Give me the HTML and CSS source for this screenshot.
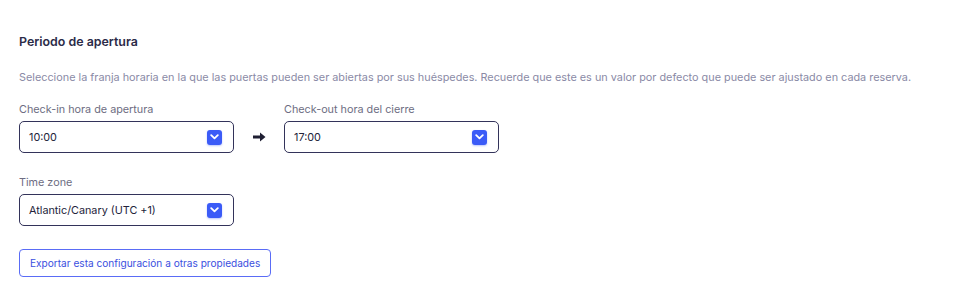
FILE: index.html
```html
<!DOCTYPE html>
<html lang="es">
<head>
    <meta charset="UTF-8">
    <title>Periodo de apertura</title>
    <link rel="stylesheet" href="styles.css">
</head>
<body>
    <section class="opening">
        <h2 class="opening-title">Periodo de apertura</h2>
        <p class="opening-desc">Seleccione la franja horaria en la que las puertas pueden ser abiertas por sus huéspedes. Recuerde que este es un valor por defecto que puede ser ajustado en cada reserva.</p>

        <div class="time-row">
            <div class="field">
                <label class="field-label">Check-in hora de apertura</label>
                <div class="select">
                    <span>10:00</span>
                    <span class="chevron">
                        <svg width="9" height="6" viewBox="0 0 9 6"><path d="M1.2 1.2 L4.5 4.4 L7.8 1.2" fill="none" stroke="#fff" stroke-width="1.8" stroke-linecap="round" stroke-linejoin="round"/></svg>
                    </span>
                </div>
            </div>

            <div class="arrow">
                <svg width="13" height="10" viewBox="0 0 13 10"><path d="M0 3.6 H7 V0.5 L12.5 5 L7 9.5 V6.4 H0 Z" fill="#1f1f33"/></svg>
            </div>

            <div class="field">
                <label class="field-label">Check-out hora del cierre</label>
                <div class="select">
                    <span>17:00</span>
                    <span class="chevron">
                        <svg width="9" height="6" viewBox="0 0 9 6"><path d="M1.2 1.2 L4.5 4.4 L7.8 1.2" fill="none" stroke="#fff" stroke-width="1.8" stroke-linecap="round" stroke-linejoin="round"/></svg>
                    </span>
                </div>
            </div>
        </div>

        <div class="field tz-field">
            <label class="field-label">Time zone</label>
            <div class="select">
                <span>Atlantic/Canary (UTC +1)</span>
                <span class="chevron">
                    <svg width="9" height="6" viewBox="0 0 9 6"><path d="M1.2 1.2 L4.5 4.4 L7.8 1.2" fill="none" stroke="#fff" stroke-width="1.8" stroke-linecap="round" stroke-linejoin="round"/></svg>
                </span>
            </div>
        </div>

        <button class="export-btn">Exportar esta configuración a otras propiedades</button>
    </section>
</body>
</html>
```

FILE: styles.css
```css
:root {
    --navy: #2b2b48;
    --muted: #8a8aa6;
    --label: #6d6d82;
    --border: #33335a;
    --blue: #3b5bf7;
}

* {
    margin: 0;
    padding: 0;
    box-sizing: border-box;
    font-family: 'Inter', sans-serif;
}

body {
    background: #fff;
    color: var(--navy);
}

.opening {
    padding: 34px 19px 0;
}

.opening-title {
    font-size: 12.4px;
    font-weight: 600;
    color: var(--navy);
    line-height: 16px;
}

.opening-desc {
    margin-top: 20px;
    font-size: 10.85px;
    line-height: 14px;
    color: var(--muted);
}

.time-row {
    display: flex;
    align-items: flex-end;
    margin-top: 19px;
}

.field {
    display: flex;
    flex-direction: column;
    gap: 4px;
}

.field-label {
    font-size: 10.8px;
    line-height: 14px;
    color: var(--label);
}

.select {
    width: 215px;
    height: 32px;
    border: 1px solid var(--border);
    border-radius: 5px;
    display: flex;
    align-items: center;
    justify-content: space-between;
    padding: 0 11px 0 9px;
    font-size: 10.8px;
    color: #23233a;
}

.chevron {
    width: 15px;
    height: 15px;
    background: var(--blue);
    border-radius: 3px;
    display: flex;
    align-items: center;
    justify-content: center;
    box-shadow: 0 1px 2px rgba(59, 91, 247, 0.35);
}

.arrow {
    width: 50px;
    height: 32px;
    display: flex;
    align-items: center;
    justify-content: center;
}

.tz-field {
    margin-top: 23px;
}

.export-btn {
    margin-top: 23px;
    height: 28px;
    padding: 0 10px;
    background: #fff;
    border: 1px solid #5a6cf6;
    border-radius: 4px;
    color: #3b4fe0;
    font-size: 10.1px;
    cursor: pointer;
}
```
